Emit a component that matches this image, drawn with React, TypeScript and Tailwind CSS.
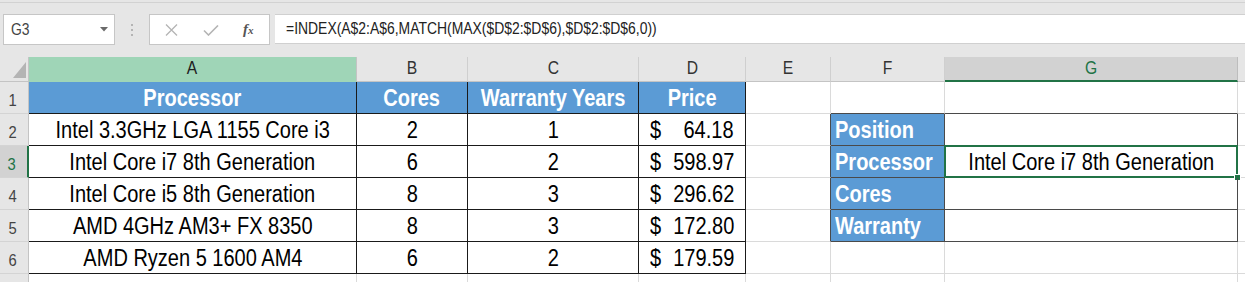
import React from "react";

const cols = "grid grid-cols-[29px_328px_111px_171px_107px_85px_114px_293px_1fr]";

const products = [
  { name: "Intel 3.3GHz LGA 1155 Core i3", cores: "2", years: "1", price: "64.18" },
  { name: "Intel Core i7 8th Generation", cores: "6", years: "2", price: "598.97" },
  { name: "Intel Core i5 8th Generation", cores: "8", years: "3", price: "296.62" },
  { name: "AMD 4GHz AM3+ FX 8350", cores: "8", years: "3", price: "172.80" },
  { name: "AMD Ryzen 5 1600 AM4", cores: "6", years: "2", price: "179.59" },
];

const labels = ["Position", "Processor", "Cores", "Warranty"];

const T = ({ children, className = "" }: { children?: React.ReactNode; className?: string }) => (
  <span className={"inline-block whitespace-nowrap leading-none scale-x-[0.87] " + className}>{children}</span>
);

const RowHead = ({ n, active }: { n: number; active?: boolean }) => (
  <div
    className={
      "flex items-end justify-center pb-[4px] pr-[3px] text-[17px] border-b border-b-[#d4d4d4] " +
      (active
        ? "bg-[#d2d2d2] text-[#217346] border-r-2 border-r-[#217346]"
        : "bg-[#e6e6e6] text-[#444] border-r border-r-[#c4c4c4]")
    }
  >
    <T>{n}</T>
  </div>
);

const Toolbar = () => (
  <div className="h-[57px] bg-[#e6e6e6] pt-[2px]">
    <div className="h-full border-t border-[#d2d2d2] flex items-start pt-[11px]">
      {/* name box */}
      <div className="ml-[3px] w-[112px] h-[31px] bg-white border border-[#c6c6c6] flex items-center pl-[7px] pr-[6px]">
        <T className="text-[16px] text-[#444] origin-left">G3</T>
        <svg className="ml-auto" width="8" height="5" viewBox="0 0 8 5">
          <path d="M0 0 L8 0 L4 4.5 Z" fill="#6a6a6a" />
        </svg>
      </div>
      {/* dots */}
      <div className="w-[34px] h-[31px] flex flex-col items-center justify-center gap-[3px]">
        <span className="w-[2px] h-[2px] bg-[#b4b4b4]" />
        <span className="w-[2px] h-[2px] bg-[#b4b4b4]" />
        <span className="w-[2px] h-[2px] bg-[#b4b4b4]" />
      </div>
      {/* buttons */}
      <div className="w-[121px] h-[31px] bg-white border border-[#c6c6c6] flex items-center pl-[15px]">
        <svg width="13" height="12" viewBox="0 0 13 12">
          <path d="M1 0.5 L12 11.5 M12 0.5 L1 11.5" stroke="#b4b4b4" strokeWidth="1.3" fill="none" />
        </svg>
        <svg className="ml-[25px] mt-[2px]" width="16" height="11" viewBox="0 0 16 11">
          <path d="M1 5.5 L5.5 10 L15 0.5" stroke="#b4b4b4" strokeWidth="1.6" fill="none" />
        </svg>
        <span className="ml-[24px] font-['Liberation_Serif'] italic font-bold text-[15px] text-[#555] leading-none">
          f<span className="text-[11px]">x</span>
        </span>
      </div>
      {/* formula */}
      <div className="ml-[5px] flex-1 h-[30px] bg-white border-y border-[#d0d0d0] flex items-center pl-[11px]">
        <T className="text-[16px] text-[#222] origin-left scale-x-[0.83]">=INDEX(A$2:A$6,MATCH(MAX($D$2:$D$6),$D$2:$D$6,0))</T>
      </div>
    </div>
  </div>
);

const ColHeads = () => {
  const letters = ["A", "B", "C", "D", "E", "F"];
  return (
    <div className={cols + " h-[25px] text-[18px]"}>
      <div className="bg-[#e6e6e6] border-r border-b border-[#c4c4c4] flex items-end justify-end pr-[2px] pb-[3px]">
        <svg width="13" height="16" viewBox="0 0 13 16">
          <path d="M13 0 L13 16 L0 16 Z" fill="#b4b4b4" />
        </svg>
      </div>
      {letters.map((l) => (
        <div
          key={l}
          className={
            "flex items-end justify-center pb-[4px] border-r border-b " +
            (l === "A"
              ? "bg-[#9fd5b7] text-[#222] border-r-[#c4c4c4] border-b-[#9fd5b7]"
              : "bg-[#e6e6e6] text-[#333] border-r-[#cfcfcf] border-b-[#c4c4c4]")
          }
        >
          <T>{l}</T>
        </div>
      ))}
      <div className="flex items-end justify-center pb-[3px] bg-[#d2d2d2] text-[#217346] border-r border-r-[#bdbdbd] border-b-2 border-b-[#217346]">
        <T>G</T>
      </div>
      <div className="bg-[#e6e6e6] border-b border-[#c4c4c4]" />
    </div>
  );
};

const HeaderRow = () => {
  const titles = ["Processor", "Cores", "Warranty Years", "Price"];
  return (
    <div className={cols + " h-[32px] text-[23px]"}>
      <RowHead n={1} />
      {titles.map((t) => (
        <div
          key={t}
          className="flex items-end justify-center pb-[3px] bg-[#5b9bd5] text-white font-bold border-r border-b border-[#1a1a1a]"
        >
          <T>{t}</T>
        </div>
      ))}
      <div className="border-r border-b border-[#dadada]" />
      <div className="border-r border-r-[#dadada] border-b border-b-[#4a4a4a]" />
      <div className="border-r border-r-[#dadada] border-b border-b-[#4a4a4a]" />
      <div className="border-b border-[#dadada]" />
    </div>
  );
};

const DataRow = ({ i }: { i: number }) => {
  const p = products[i];
  const label = labels[i];
  const boxed = i < 4;
  const cell = "flex items-end pb-[3px] border-r border-b border-[#1a1a1a]";
  return (
    <div className={cols + " h-[32px] text-[23px] text-black"}>
      <RowHead n={i + 2} active={i === 1} />
      <div className={cell + " justify-center"}>
        <T>{p.name}</T>
      </div>
      <div className={cell + " justify-center"}>
        <T>{p.cores}</T>
      </div>
      <div className={cell + " justify-center"}>
        <T>{p.years}</T>
      </div>
      <div className={cell + " justify-between pl-[11px] pr-[11px]"}>
        <T className="origin-left">$</T>
        <T className="origin-right">{p.price}</T>
      </div>
      <div
        className={
          "border-b border-b-[#dadada] border-r " + (boxed ? "border-r-[#4a4a4a]" : "border-r-[#dadada]")
        }
      />
      {boxed ? (
        <div className="flex items-end pb-[3px] pl-[4px] bg-[#5b9bd5] text-white font-bold border-r border-b border-[#4a4a4a]">
          <T className="origin-left">{label}</T>
        </div>
      ) : (
        <div className="border-r border-b border-[#dadada]" />
      )}
      {boxed ? (
        <div className="relative flex items-end justify-center pb-[3px] border-r border-b border-[#4a4a4a]">
          {i === 1 && (
            <>
              <T>Intel Core i7 8th Generation</T>
              <div className="absolute -left-[1px] -top-[1px] -right-[1px] -bottom-[1px] border-2 border-[#217346]" />
              <div className="absolute -right-[4px] -bottom-[4px] w-[7px] h-[7px] bg-[#217346] border border-white" />
            </>
          )}
        </div>
      ) : (
        <div className="border-r border-b border-[#dadada]" />
      )}
      <div className="border-b border-[#dadada]" />
    </div>
  );
};

const TailRow = () => (
  <div className={cols + " h-[10px]"}>
    <div className="bg-[#e6e6e6] border-r border-[#c4c4c4]" />
    {Array.from({ length: 7 }).map((_, k) => (
      <div key={k} className="border-r border-[#dadada]" />
    ))}
    <div />
  </div>
);

export default function App() {
  return (
    <div className="w-[1245px] h-[282px] overflow-hidden bg-white font-['Liberation_Sans',Arial,sans-serif]">
      <Toolbar />
      <ColHeads />
      <HeaderRow />
      {products.map((_, i) => (
        <DataRow key={i} i={i} />
      ))}
      <TailRow />
    </div>
  );
}
